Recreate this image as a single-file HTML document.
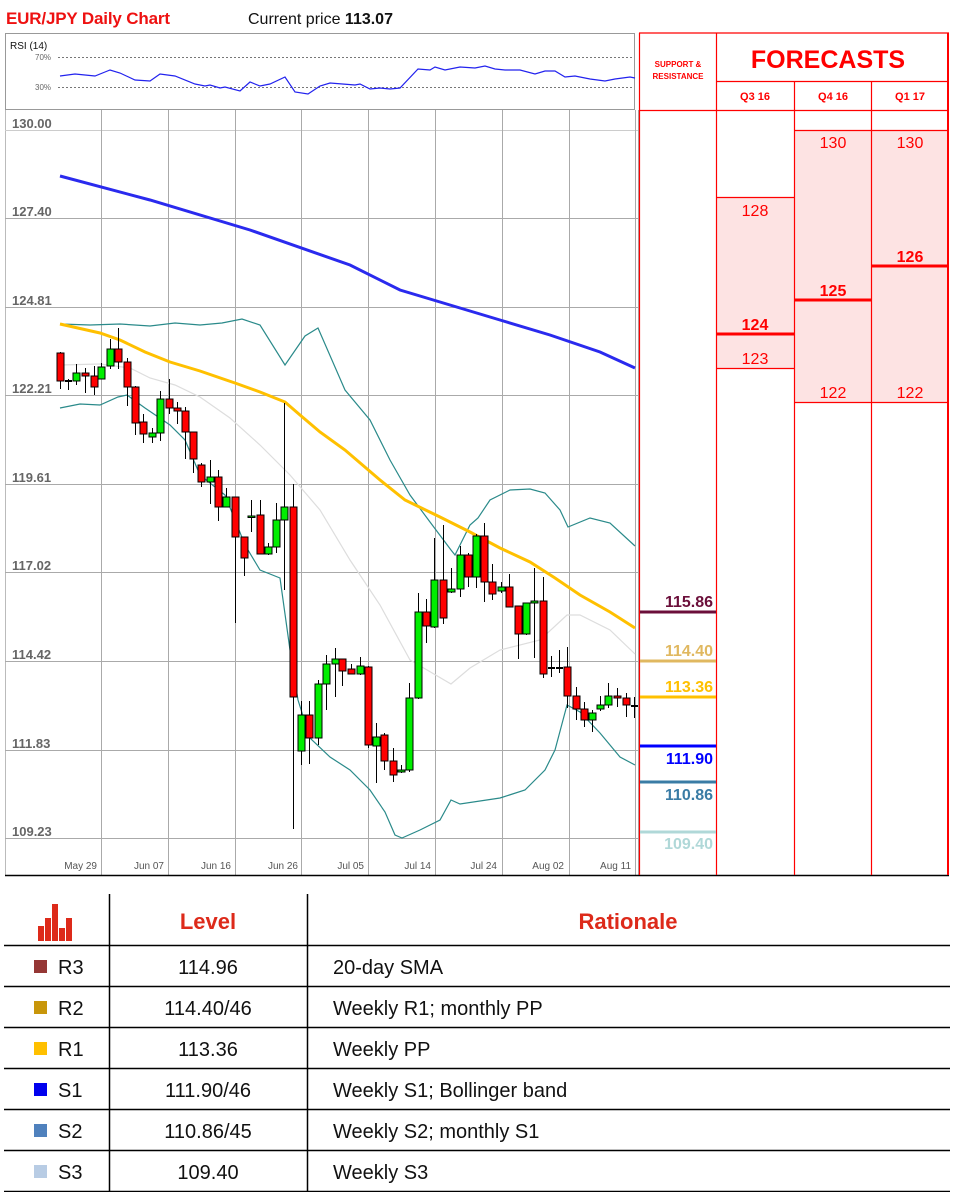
<!DOCTYPE html>
<html><head><meta charset="utf-8"><style>
html,body{margin:0;padding:0;background:#fff;width:959px;height:1192px;overflow:hidden}
svg{display:block}
text{font-family:"Liberation Sans",sans-serif}
</style></head><body>
<svg id="s" width="959" height="1192" viewBox="0 0 959 1192" xmlns="http://www.w3.org/2000/svg">
<rect width="959" height="1192" fill="#fff"/>
<text x="6" y="24" font-size="17" font-weight="bold" fill="#ee1111" textLength="164">EUR/JPY Daily Chart</text>
<text x="248" y="24" font-size="16" fill="#111">Current price <tspan font-weight="bold">113.07</tspan></text>
<!-- RSI -->
<rect x="5.5" y="33.5" width="629" height="76" fill="#fff" stroke="#999"/>
<text x="10" y="49" font-size="10" fill="#111">RSI (14)</text>
<line x1="58" y1="57.5" x2="634" y2="57.5" stroke="#777" stroke-dasharray="2,2"/>
<line x1="58" y1="87.5" x2="634" y2="87.5" stroke="#777" stroke-dasharray="2,2"/>
<text x="35" y="60" font-size="8" fill="#666">70%</text>
<text x="35" y="90" font-size="8" fill="#666">30%</text>
<polyline fill="none" stroke="#2222ee" stroke-width="1.2" points="60,76 75,74 95,76 105,72 110,70 120,73 135,80 150,81 160,74 175,76 195,84 205,86 210,85 220,88 225,87 240,91 250,82 260,86 270,84 285,77 295,92 308,94 320,86 330,83 355,85 360,84 370,89 380,88 390,89 400,88 418,69 430,70 435,67 445,70 460,67 475,68 485,66 495,69 505,70 520,70 535,74 545,71 555,71 565,77 575,76 590,79 605,81 615,79 630,77 635,78"/>
<!-- chart frame -->
<rect x="5.5" y="130" width="633" height="745" fill="#fff"/>
<line x1="5.5" y1="110" x2="5.5" y2="875" stroke="#bbb"/>
<g id="grid" stroke="#aaa" stroke-width="1"></g>
<g font-size="13" font-weight="bold" fill="#666">
<text x="12" y="128">130.00</text><text x="12" y="216">127.40</text><text x="12" y="305">124.81</text><text x="12" y="393">122.21</text><text x="12" y="482">119.61</text><text x="12" y="570">117.02</text><text x="12" y="659">114.42</text><text x="12" y="748">111.83</text><text x="12" y="836">109.23</text>
</g>
<g font-size="10" fill="#555" text-anchor="end">
<text x="97" y="869">May 29</text><text x="164" y="869">Jun 07</text><text x="231" y="869">Jun 16</text><text x="298" y="869">Jun 26</text><text x="364" y="869">Jul 05</text><text x="431" y="869">Jul 14</text><text x="497" y="869">Jul 24</text><text x="564" y="869">Aug 02</text><text x="631" y="869">Aug 11</text>
</g>
<line x1="5" y1="875.5" x2="949" y2="875.5" stroke="#000" stroke-width="1.5"/>
<!-- indicators -->
<polyline fill="none" stroke="#2a2aee" stroke-width="3" points="60,176 150,200 250,230 350,265 400,290 450,305 500,320 550,335 600,352 635,368"/>
<polyline fill="none" stroke="#ddd" stroke-width="1.2" points="60,365 100,364 130,368 150,378 175,385 200,397 230,418 260,445 290,475 320,510 350,560 380,605 410,660 451,684 470,668 500,650 540,640 567,615 580,615 610,630 635,654"/>
<polyline fill="none" stroke="#2a8a8a" stroke-width="1.2" points="60,324 90,325 120,324 150,326 175,323 200,325 222,323 242,319 260,325 285,365 305,336 318,328 345,390 370,420 390,460 410,495 430,522 451,550 455,555 470,525 478,518 490,500 510,490 530,489 545,493 560,510 568,527 590,518 610,523 635,546"/>
<polyline fill="none" stroke="#2a8a8a" stroke-width="1.2" points="60,408 80,404 100,405 118,397 127,395 145,408 170,425 185,440 200,475 225,495 245,545 260,570 280,578 290,650 298,700 310,738 330,757 350,770 370,790 385,812 395,835 402,838 420,830 440,820 451,800 460,804 500,798 525,790 545,770 555,750 567,705 580,712 600,733 620,757 635,765"/>
<polyline fill="none" stroke="#ffc000" stroke-width="3" points="60,324 100,333 120,340 145,352 170,362 200,371 235,383 260,392 285,402 300,415 320,432 345,450 380,480 405,500 440,517 470,532 500,548 530,562 555,578 580,595 610,612 635,628"/>
<g id="candles"></g>
<!-- right panel -->
<rect x="795" y="131" width="76" height="271" fill="#fde3e3"/>
<rect x="871" y="131" width="77" height="271" fill="#fde3e3"/>
<rect x="716" y="198" width="79" height="170" fill="#fde3e3"/>
<g stroke="#ff0000" stroke-width="1.2">
<line x1="639" y1="33" x2="949" y2="33"/>
<line x1="716" y1="81.5" x2="949" y2="81.5"/>
<line x1="639" y1="110.5" x2="949" y2="110.5"/>
<line x1="639.5" y1="33" x2="639.5" y2="875"/>
<line x1="716.5" y1="33" x2="716.5" y2="875"/>
<line x1="794.5" y1="81" x2="794.5" y2="875"/>
<line x1="871.5" y1="81" x2="871.5" y2="875"/>
<line x1="795" y1="130.5" x2="949" y2="130.5"/>
<line x1="716" y1="197.5" x2="795" y2="197.5"/>
<line x1="716" y1="368.5" x2="795" y2="368.5"/>
<line x1="795" y1="402.5" x2="949" y2="402.5"/>
</g>
<line x1="948" y1="33" x2="948" y2="875" stroke="#ff0000" stroke-width="2"/>
<g stroke="#ff0000" stroke-width="3">
<line x1="716" y1="334" x2="795" y2="334"/><line x1="795" y1="300" x2="871" y2="300"/><line x1="871" y1="266" x2="949" y2="266"/>
</g>
<g fill="#ff0000" text-anchor="middle">
<text x="678" y="67" font-size="8" font-weight="bold">SUPPORT &amp;</text>
<text x="678" y="79" font-size="8" font-weight="bold">RESISTANCE</text>
<text x="828" y="68" font-size="25" font-weight="bold">FORECASTS</text>
<text x="755" y="100" font-size="11" font-weight="bold">Q3 16</text>
<text x="833" y="100" font-size="11" font-weight="bold">Q4 16</text>
<text x="910" y="100" font-size="11" font-weight="bold">Q1 17</text>
<g font-size="16">
<text x="755" y="216">128</text><text x="755" y="364">123</text>
<text x="833" y="148">130</text><text x="910" y="148">130</text>
<text x="833" y="398">122</text><text x="910" y="398">122</text>
</g>
<g font-size="16" font-weight="bold">
<text x="755" y="330">124</text><text x="833" y="296">125</text><text x="910" y="262">126</text>
</g>
</g>
<!-- S&R -->
<g stroke-width="3">
<line x1="640" y1="612" x2="716" y2="612" stroke="#6b0f3a"/>
<line x1="640" y1="661" x2="716" y2="661" stroke="#e0b860"/>
<line x1="640" y1="697" x2="716" y2="697" stroke="#ffc000"/>
<line x1="640" y1="746" x2="716" y2="746" stroke="#0000ff"/>
<line x1="640" y1="782" x2="716" y2="782" stroke="#3a7ca5"/>
<line x1="640" y1="832" x2="716" y2="832" stroke="#b0d8d8"/>
</g>
<g font-size="16" font-weight="bold" text-anchor="end">
<text x="713" y="607" fill="#6b0f3a">115.86</text>
<text x="713" y="656" fill="#e0b860">114.40</text>
<text x="713" y="692" fill="#ffc000">113.36</text>
<text x="713" y="764" fill="#0000ff">111.90</text>
<text x="713" y="800" fill="#3a7ca5">110.86</text>
<text x="713" y="849" fill="#b0d8d8">109.40</text>
</g>
<!-- table -->
<g fill="#dd2a1a">
<rect x="38" y="926" width="6" height="15"/><rect x="45" y="918" width="6" height="23"/><rect x="52" y="904" width="6" height="37"/><rect x="59" y="928" width="6" height="13"/><rect x="66" y="918" width="6" height="23"/>
</g>
<g stroke="#000" stroke-width="1.5">
<line x1="109.5" y1="894" x2="109.5" y2="1192"/><line x1="307.5" y1="894" x2="307.5" y2="1192"/>
<line x1="4" y1="945.5" x2="950" y2="945.5"/><line x1="4" y1="986.5" x2="950" y2="986.5"/><line x1="4" y1="1027.5" x2="950" y2="1027.5"/><line x1="4" y1="1068.5" x2="950" y2="1068.5"/><line x1="4" y1="1109.5" x2="950" y2="1109.5"/><line x1="4" y1="1150.5" x2="950" y2="1150.5"/><line x1="4" y1="1191.5" x2="950" y2="1191.5"/>
</g>
<g font-size="22" font-weight="bold" fill="#dd2a1a" text-anchor="middle">
<text x="208" y="929">Level</text><text x="628" y="929">Rationale</text>
</g>
<rect x="34" y="960" width="13" height="13" fill="#953735"/>
<rect x="34" y="1001" width="13" height="13" fill="#c8960a"/>
<rect x="34" y="1042" width="13" height="13" fill="#ffc000"/>
<rect x="34" y="1083" width="13" height="13" fill="#0000ee"/>
<rect x="34" y="1124" width="13" height="13" fill="#4f81bd"/>
<rect x="34" y="1165" width="13" height="13" fill="#b8cce4"/>
<g font-size="20" fill="#111">
<text x="58" y="974">R3</text><text x="58" y="1015">R2</text><text x="58" y="1056">R1</text><text x="58" y="1097">S1</text><text x="58" y="1138">S2</text><text x="58" y="1179">S3</text>
<g text-anchor="middle"><text x="208" y="974">114.96</text><text x="208" y="1015">114.40/46</text><text x="208" y="1056">113.36</text><text x="208" y="1097">111.90/46</text><text x="208" y="1138">110.86/45</text><text x="208" y="1179">109.40</text></g>
<text x="333" y="974">20-day SMA</text><text x="333" y="1015">Weekly R1; monthly PP</text><text x="333" y="1056">Weekly PP</text><text x="333" y="1097">Weekly S1; Bollinger band</text><text x="333" y="1138">Weekly S2; monthly S1</text><text x="333" y="1179">Weekly S3</text>
</g>
</svg>
<script>
var NS="http://www.w3.org/2000/svg";
function el(t,a,p){var e=document.createElementNS(NS,t);for(var k in a)e.setAttribute(k,a[k]);p.appendChild(e);return e;}
var g=document.getElementById("grid");
[130,218,307,395,484,572,661,750,838].forEach(function(y){el("line",{x1:5,y1:y+.5,x2:638,y2:y+.5,stroke:y==130?"#ccc":"#aaa"},g);});
for(var i=0;i<9;i++){var x=Math.round(101+66.8*i)+.5;el("line",{x1:x,y1:110,x2:x,y2:875,stroke:"#aaa"},g);}
el("line",{x1:638.5,y1:110,x2:638.5,y2:875,stroke:"#aaa"},g);
var C=[[60,353,381,352,389,"r"],[68,380,381,379,390,"k"],[76,373,381,364,385,"g"],[85,373,376,368,393,"r"],[94,376,387,366,395,"r"],[101,367,379,363,379,"g"],[110,349,366,339,369,"g"],[118,349,362,328,369,"r"],[127,362,387,358,406,"r"],[135,387,423,386,435,"r"],[143,422,434,414,443,"r"],[152,433,437,428,443,"g"],[160,399,433,391,441,"g"],[169,399,408,379,414,"r"],[177,408,411,402,424,"r"],[185,411,432,407,459,"r"],[193,432,459,432,473,"r"],[201,465,482,463,487,"r"],[210,477,482,460,504,"g"],[218,477,507,470,521,"r"],[226,497,507,488,507,"g"],[235,497,537,497,623,"r"],[244,537,558,537,576,"r"],[251,516,517,500,532,"g"],[260,515,554,500,554,"r"],[268,547,554,543,555,"g"],[276,520,547,503,553,"g"],[284,507,520,403,590,"g"],[293,507,697,484,829,"r"],[301,715,751,701,765,"g"],[309,715,738,701,764,"r"],[318,684,738,680,745,"g"],[326,664,684,655,710,"g"],[335,659,664,648,697,"g"],[342,659,671,659,686,"r"],[351,669,674,664,674,"r"],[360,666,674,657,675,"g"],[368,667,745,666,748,"r"],[376,737,746,723,783,"g"],[384,735,761,733,770,"r"],[393,761,775,748,782,"r"],[401,770,772,765,773,"g"],[409,698,770,683,772,"g"],[418,612,698,593,699,"g"],[426,612,626,599,643,"r"],[434,580,627,538,628,"g"],[443,580,618,525,624,"r"],[451,589,592,568,593,"g"],[460,555,589,546,597,"g"],[468,555,577,553,587,"r"],[476,536,577,534,588,"g"],[484,536,582,523,602,"r"],[492,582,594,564,600,"r"],[501,587,591,582,593,"g"],[509,587,607,574,607,"r"],[518,606,634,606,659,"r"],[526,603,634,603,635,"g"],[534,601,603,568,658,"g"],[543,601,674,577,678,"r"],[551,667,668,656,677,"k"],[559,667,668,650,673,"k"],[567,667,696,647,708,"r"],[576,696,709,687,720,"r"],[584,709,720,702,727,"r"],[592,713,720,710,732,"g"],[600,705,709,696,711,"g"],[608,696,705,683,708,"g"],[617,696,698,688,707,"r"],[626,698,705,693,717,"r"],[634,705,706,697,718,"k"]];
var cg=document.getElementById("candles");
C.forEach(function(c){var x=c[0]+.5;el("line",{x1:x,y1:c[3],x2:x,y2:c[4],stroke:"#000","stroke-width":1},cg);
var h=Math.max(c[2]-c[1],1.5);
if(c[5]=="k"){el("rect",{x:c[0]-3,y:c[1],width:7,height:2,fill:"#000"},cg);}
else el("rect",{x:c[0]-3,y:c[1],width:7,height:h,fill:c[5]=="r"?"#ff0000":"#00ee00",stroke:"#000","stroke-width":1},cg);});
</script>
</body></html>
